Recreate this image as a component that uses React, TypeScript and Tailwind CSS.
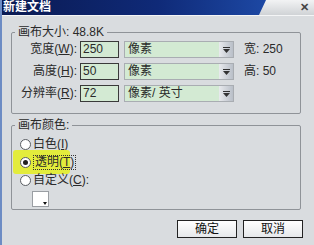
import React from "react";

const font = { fontFamily: '"Liberation Sans", "Noto Sans CJK SC", sans-serif' };

function Row({ label, ul, value, unit, extra }: { label: string; ul: string; value: string; unit: string; extra?: React.ReactNode }) {
  return (
    <div className="flex items-center h-[17px]">
      <div className="w-[65px] text-right text-[12px] leading-[17px] text-[#2a2a2a] whitespace-nowrap">
        {label}(<span className="underline">{ul}</span>):
      </div>
      <div className="ml-[3px] w-[39px] h-[17px] border border-[#3a3a3a] bg-[#d3ead3] text-[12px] leading-[15px] pl-[2px] text-[#2a2a2a]">{value}</div>
      <div className="ml-[5px] w-[110px] h-[17px] border border-[#a9adb2] bg-[#d3ead3] flex">
        <div className="flex-1 text-[12px] leading-[15px] pl-[3px] text-[#2a2a2a] whitespace-nowrap overflow-hidden">{unit}</div>
        <div className="w-[14px] h-full bg-gradient-to-r from-[#e8eaed] to-[#b9bfc8] flex items-center justify-center">
          <svg width="7" height="6" viewBox="0 0 7 6"><rect x="0" y="0" width="7" height="1" fill="#333" /><path d="M0 2 H7 L3.5 6 Z" fill="#333" /></svg>
        </div>
      </div>
      <div className="ml-[10px] text-[12px] leading-[17px] text-[#2a2a2a] whitespace-nowrap">{extra}</div>
    </div>
  );
}

function Radio({ checked, label, ul, focus, colon }: { checked?: boolean; label: string; ul: string; focus?: boolean; colon?: boolean }) {
  return (
    <div className="flex items-center h-[18px]">
      <div className="w-[11px] h-[11px] rounded-full border border-[#5a5e63] bg-white flex items-center justify-center">
        {checked && <div className="w-[5px] h-[5px] rounded-full bg-[#222]" />}
      </div>
      <div className={"ml-[2px] text-[12px] text-[#2a2a2a] whitespace-nowrap " + (focus ? "border border-dotted border-[#333] leading-[13px] px-px" : "leading-[16px]")}>
        {label}(<span className="underline">{ul}</span>){colon ? ":" : ""}
      </div>
    </div>
  );
}

export default function App() {
  return (
    <div style={font} className="w-[314px] h-[245px] bg-[#d9dcdf] overflow-hidden border-l-2 border-[#6d8cc4] flex flex-col">
      <div className="relative h-[15px] bg-gradient-to-b from-[#f2f3f4] to-[#d0d3d6] shrink-0">
        <div className="absolute inset-0 bg-gradient-to-r from-[#0a1a52] via-[#0f2a78] to-[#2456b8] [clip-path:polygon(0_0,264px_0,257px_100%,0_100%)]" />
        <div className="absolute left-[1px] top-0 text-white font-bold text-[12px] leading-[15px]">新建文档</div>
        <div className="absolute right-[5px] top-0 text-[#444] text-[11px] leading-[15px] font-bold">✕</div>
      </div>
      <div className="h-px bg-[#f4f5f6] shrink-0" />
      <fieldset className="ml-[9px] mt-[9px] w-[290px] h-[89px] border border-[#8f9398] rounded-[2px] shrink-0">
        <legend className="ml-[3px] px-[3px] text-[12px] leading-[14px] text-[#2a2a2a]">画布大小: 48.8K</legend>
        <div className="mt-[2px] flex flex-col gap-[5px]">
          <Row label="宽度" ul="W" value="250" unit="像素" extra="宽:  250" />
          <Row label="高度" ul="H" value="50" unit="像素" extra="高:  50" />
          <Row label="分辨率" ul="R" value="72" unit="像素/ 英寸" />
        </div>
      </fieldset>
      <fieldset className="ml-[9px] mt-[4px] w-[290px] h-[92px] border border-[#8f9398] rounded-[2px] shrink-0">
        <legend className="ml-[3px] px-[3px] text-[12px] leading-[14px] text-[#2a2a2a]">画布颜色:</legend>
        <div className="ml-[8px] mt-[3px] flex flex-col">
          <Radio label="白色" ul="I" />
          <div className="-ml-[7px] w-[57px] h-[24px] bg-[#e3ec3c] rounded-[3px] flex items-center pl-[7px] my-[-3px]">
            <Radio checked label="透明" ul="T" focus />
          </div>
          <Radio label="自定义" ul="C" colon />
          <div className="ml-[12px] mt-[2px] relative w-[17px] h-[16px] bg-white border border-[#9a9ea3]">
            <svg className="absolute right-[1px] bottom-[1px]" width="4" height="3" viewBox="0 0 4 3"><path d="M0 0 H4 L2 3 Z" fill="#111" /></svg>
          </div>
        </div>
      </fieldset>
      <div className="flex justify-end gap-[6px] mt-[10px] mr-[11px]">
        <button className="w-[60px] h-[18px] border-[1.5px] border-[#222] bg-gradient-to-b from-white to-[#e6e8ea] text-[12px] leading-[14px] text-[#111]">确定</button>
        <button className="w-[60px] h-[18px] border-[1.5px] border-[#222] bg-gradient-to-b from-white to-[#e6e8ea] text-[12px] leading-[14px] text-[#111]">取消</button>
      </div>
    </div>
  );
}
